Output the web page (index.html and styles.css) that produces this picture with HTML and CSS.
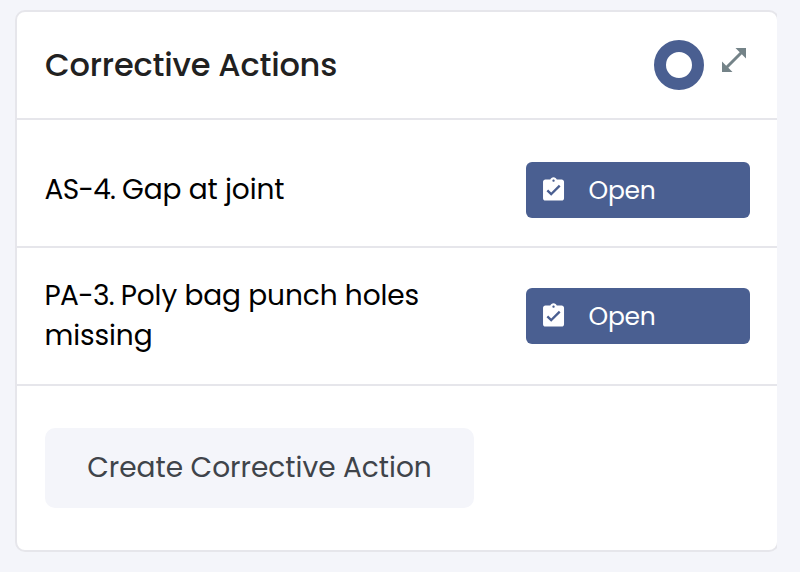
FILE: index.html
```html
<!DOCTYPE html>
<html lang="en">
<head>
    <meta charset="UTF-8">
    <meta name="viewport" content="width=device-width, initial-scale=1.0">
    <title>Corrective Actions</title>
    <link rel="stylesheet" href="styles.css">
</head>
<body>
    <div class="panel">
        <div class="card">
            <div class="card-header">
                <h1 class="card-title">Corrective Actions</h1>
                <div class="chart"></div>
                <svg class="expand-icon" viewBox="0 0 24 24">
                    <path d="M13.5 0H24V10.5L19.8 6.3L6.3 19.8L10.5 24H0V13.5L4.2 17.7L17.7 4.2Z" />
                </svg>
            </div>
            <div class="action-list">
                <div class="action-item">
                    <p class="action-name"><span class="action-code">AS-4. </span>Gap at joint</p>
                    <button class="status">
                        <svg class="status-icon" viewBox="0.4 0 24 24">
                            <path d="M19 3h-4.18C14.4 1.84 13.3 1 12 1s-2.4.84-2.82 2H5c-1.1 0-2 .9-2 2v14c0 1.1.9 2 2 2h14c1.1 0 2-.9 2-2V5c0-1.1-.9-2-2-2zm-7 0c.55 0 1 .45 1 1s-.45 1-1 1-1-.45-1-1 .45-1 1-1zm-2 14l-4-4 1.41-1.41L10 14.17l6.59-6.59L18 9l-8 8z" />
                        </svg>
                        <span class="status-text">Open</span>
                    </button>
                </div>
                <div class="action-item">
                    <p class="action-name"><span class="action-code">PA-3. </span>Poly bag punch holes<br>missing</p>
                    <button class="status">
                        <svg class="status-icon" viewBox="0.4 0 24 24">
                            <path d="M19 3h-4.18C14.4 1.84 13.3 1 12 1s-2.4.84-2.82 2H5c-1.1 0-2 .9-2 2v14c0 1.1.9 2 2 2h14c1.1 0 2-.9 2-2V5c0-1.1-.9-2-2-2zm-7 0c.55 0 1 .45 1 1s-.45 1-1 1-1-.45-1-1 .45-1 1-1zm-2 14l-4-4 1.41-1.41L10 14.17l6.59-6.59L18 9l-8 8z" />
                        </svg>
                        <span class="status-text">Open</span>
                    </button>
                </div>
            </div>
            <div class="card-footer">
                <button class="btn-create">Create Corrective Action</button>
            </div>
        </div>
    </div>
</body>
</html>
```

FILE: styles.css
```css
* {
    box-sizing: border-box;
}
body {
    font-family: Poppins, Inter, sans-serif;
    margin: 0;
    background-color: #f4f5fa;
    color: #000;
}
button {
    font-family: inherit;
    border: none;
    cursor: pointer;
}
.panel {
    width: 777px;
    height: 572px;
    padding: 10px 0 0 15px;
    overflow: hidden;
}
.card {
    width: 764px;
    background-color: #fff;
    border: 2px solid #e6e6eb;
    border-radius: 10px;
}
.card-header {
    display: flex;
    align-items: center;
    height: 108px;
    padding: 0 31px 0 28px;
    border-bottom: 2px solid #e6e6eb;
}
.card-title {
    flex: 1;
    margin: 0;
    font-size: 32px;
    font-weight: 500;
    line-height: 48px;
    letter-spacing: -0.2px;
    color: #212121;
}
.chart {
    width: 50px;
    height: 50px;
    border: 12px solid #4a5f91;
    border-radius: 50%;
}
.expand-icon {
    width: 24px;
    height: 24px;
    margin: 0 0 10px 18px;
    fill: #748388;
}
.action-list {
    padding-top: 14px;
}
.action-item {
    display: flex;
    align-items: center;
    justify-content: space-between;
    padding: 28px 27px 28px 28px;
    border-bottom: 2px solid #e6e6eb;
}
.action-name {
    width: 400px;
    margin: 0 0 0 -0.5px;
    font-size: 28px;
    line-height: 40px;
    letter-spacing: -0.1px;
}
.action-code {
    letter-spacing: -0.7px;
}
.status {
    display: flex;
    align-items: center;
    width: 224px;
    height: 56px;
    padding: 0 14px;
    border-radius: 6px;
    background-color: #4a5f91;
    color: #fff;
    font-size: 25px;
    letter-spacing: -0.25px;
}
.status-icon {
    width: 28px;
    height: 28px;
    margin-right: 20.5px;
    fill: #fff;
}
.status-text {
    padding-top: 2px;
}
.card-footer {
    padding: 42px 28px;
}
.btn-create {
    width: 429px;
    height: 80px;
    border-radius: 10px;
    background-color: #f4f5fa;
    color: #3f444a;
    font-size: 28px;
}
```
